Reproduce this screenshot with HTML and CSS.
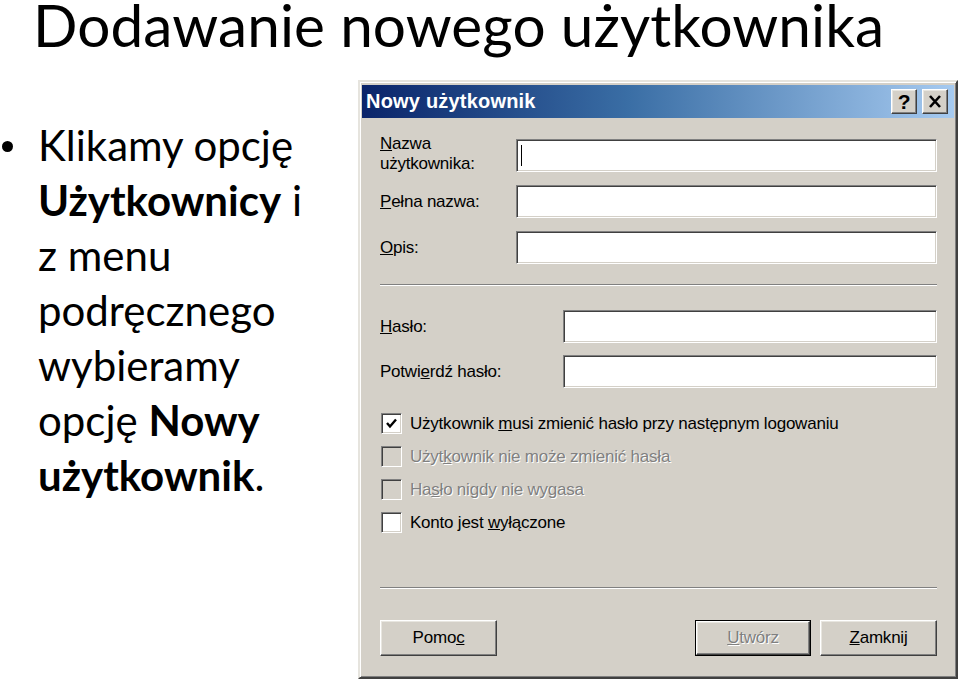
FILE: index.html
```html
<!DOCTYPE html>
<html lang="pl">
<head>
<meta charset="utf-8">
<title>Dodawanie nowego użytkownika</title>
<link rel="stylesheet" href="styles.css">
</head>
<body>
<div class="slide">
  <h1 class="title">Dodawanie nowego użytkownika</h1>
  <div class="content">
    <ul class="bullets">
      <li>Klikamy opcję<br><b>Użytkownicy</b> i<br>z menu<br>podręcznego<br>wybieramy<br>opcję <b>Nowy</b><br><b>użytkownik</b>.</li>
    </ul>
    <div class="dialog">
      <div class="titlebar">
        <span class="title-text">Nowy użytkownik</span>
        <div class="tb-buttons">
          <span class="tb-btn raised">?</span>
          <span class="tb-btn raised close">
            <svg width="14" height="13" viewBox="0 0 14 13"><path d="M2 1 L12 12 M12 1 L2 12" stroke="#000" stroke-width="2.6"/></svg>
          </span>
        </div>
      </div>
      <div class="dlg-body">
        <div class="field-row">
          <label class="label two-line"><u>N</u>azwa<br>użytkownika:</label>
          <div class="input sunken"><span class="caret"></span></div>
        </div>
        <div class="field-row">
          <label class="label"><u>P</u>ełna nazwa:</label>
          <div class="input sunken"></div>
        </div>
        <div class="field-row">
          <label class="label"><u>O</u>pis:</label>
          <div class="input sunken"></div>
        </div>
        <div class="separator sep1"></div>
        <div class="field-row pw first-pw">
          <label class="label wide"><u>H</u>asło:</label>
          <div class="input sunken"></div>
        </div>
        <div class="field-row pw">
          <label class="label wide">Potwi<u>e</u>rdź hasło:</label>
          <div class="input sunken"></div>
        </div>
        <div class="checks">
          <div class="check-row">
            <span class="checkbox sunken">
              <svg width="13" height="13" viewBox="0 0 13 13"><path d="M2 6 L5 9.5 L11 2.5" fill="none" stroke="#000" stroke-width="2.4"/></svg>
            </span>
            <span class="check-label">Użytkownik <u>m</u>usi zmienić hasło przy następnym logowaniu</span>
          </div>
          <div class="check-row disabled">
            <span class="checkbox sunken"></span>
            <span class="check-label">Użyt<u>k</u>ownik nie może zmienić hasła</span>
          </div>
          <div class="check-row disabled">
            <span class="checkbox sunken"></span>
            <span class="check-label">Ha<u>s</u>ło nigdy nie wygasa</span>
          </div>
          <div class="check-row">
            <span class="checkbox sunken"></span>
            <span class="check-label">Konto jest <u>w</u>yłączone</span>
          </div>
        </div>
        <div class="separator sep2"></div>
        <div class="buttons">
          <span class="btn raised">Pomo<u>c</u></span>
          <span class="spacer"></span>
          <span class="btn-default"><span class="btn raised disabled-text"><u>U</u>twórz</span></span>
          <span class="btn raised"><u>Z</u>amknij</span>
        </div>
      </div>
    </div>
  </div>
</div>
</body>
</html>
```
FILE: styles.css
```css
html, body {
  margin: 0;
  padding: 0;
  background: #ffffff;
}

.slide {
  width: 960px;
  height: 679px;
  overflow: hidden;
  position: relative;
  font-family: Lato, "Open Sans", sans-serif;
  color: #000;
}

.title {
  margin: 0;
  padding-left: 33px;
  font-weight: 400;
  font-size: 58.5px;
  letter-spacing: 0.1px;
  line-height: 48px;
  height: 48px;
  white-space: nowrap;
}

.content {
  display: flex;
  margin-top: 32px;
}

.bullets {
  width: 358px;
  margin: 0;
  padding: 38px 0 0 0;
  list-style: none;
  font-size: 42px;
  line-height: 55px;
}

.bullets li {
  position: relative;
  padding-left: 38px;
}

.bullets li::before {
  content: "";
  position: absolute;
  left: 2px;
  top: 23px;
  width: 11px;
  height: 11px;
  border-radius: 50%;
  background: #000;
}

.bullets b {
  font-weight: 700;
}

/* Dialog */
.dialog {
  width: 600px;
  height: 599px;
  box-sizing: border-box;
  background: #d4d0c8;
  border: 2px solid;
  border-color: #e6e4de #404040 #404040 #e6e4de;
  box-shadow: inset 1px 1px #ffffff, inset -1px -1px #808080;
  padding: 3px 2px 2px 2px;
  font-family: "Liberation Sans", Arial, sans-serif;
  font-size: 17px;
  letter-spacing: -0.22px;
  color: #000;
}

.titlebar {
  height: 33px;
  background: linear-gradient(to right, #0a246a 0%, #3a6ea5 45%, #a6caf0 100%);
  display: flex;
  align-items: center;
  justify-content: space-between;
  padding: 0 6px 0 4px;
}

.title-text {
  color: #fff;
  font-weight: 700;
  font-size: 20px;
  letter-spacing: 0.2px;
}

.tb-buttons {
  display: flex;
  gap: 5px;
}

.raised {
  background: #d4d0c8;
  border: 1px solid;
  border-color: #ffffff #404040 #404040 #ffffff;
  box-shadow: inset -1px -1px #808080, inset 1px 1px #e8e6e0;
  box-sizing: border-box;
}

.sunken {
  border: 1px solid;
  border-color: #808080 #ffffff #ffffff #808080;
  box-shadow: inset 1px 1px #404040, inset -1px -1px #d4d0c8;
  box-sizing: border-box;
}

.tb-btn {
  width: 26px;
  height: 25px;
  display: flex;
  align-items: center;
  justify-content: center;
  font-weight: 700;
  font-size: 21px;
}

.dlg-body {
  padding: 21px 17px 0 18px;
}

.field-row {
  display: flex;
  align-items: center;
  height: 33px;
  margin-bottom: 13px;
}

.label {
  width: 136px;
  flex: none;
  line-height: 19px;
}

.label.two-line {
  line-height: 20px;
  margin-top: -3px;
}

.label.wide {
  width: 183px;
}

.input {
  flex: 1;
  height: 33px;
  background: #fff;
  display: flex;
  align-items: center;
  padding-left: 4px;
}

.caret {
  width: 1px;
  height: 21px;
  background: #000;
}

.separator {
  height: 1px;
  background: #808080;
  border-bottom: 1px solid #ffffff;
}

.sep1 {
  margin-top: 20px;
  margin-bottom: 24px;
}

.field-row.pw {
  margin-bottom: 12px;
}

.checks {
  margin-top: 19px;
  display: flex;
  flex-direction: column;
}

.check-row {
  display: flex;
  align-items: center;
  height: 33px;
}

.checkbox {
  width: 21px;
  height: 21px;
  background: #fff;
  margin-left: 1px;
  margin-right: 8px;
  display: flex;
  align-items: center;
  justify-content: center;
}

.check-row.disabled .checkbox {
  background: #d4d0c8;
}

.check-row.disabled .check-label,
.disabled-text {
  color: #808080;
  text-shadow: 1px 1px 0 #ffffff;
}

.sep2 {
  margin-top: 48px;
}

.buttons {
  display: flex;
  align-items: center;
  margin-top: 31px;
}

.spacer {
  flex: 1;
}

.btn {
  width: 117px;
  height: 36px;
  display: flex;
  align-items: center;
  justify-content: center;
}

.btn-default {
  border: 1px solid #000;
  margin-right: 9px;
  display: flex;
}

.btn-default .btn {
  width: 114px;
  height: 34px;
}
```
